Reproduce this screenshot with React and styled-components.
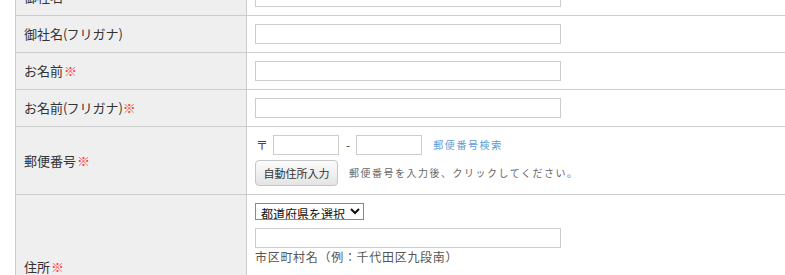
import React from 'react';
import styled, { createGlobalStyle } from 'styled-components';

const GlobalStyle = createGlobalStyle`
  body {
    margin: 0;
    background: #ffffff;
    overflow: hidden;
    font-family: "Noto Sans CJK JP", "Noto Sans", sans-serif;
    color: #333333;
  }
`;

// The page is scrolled so the first row sits partly above the window
const Page = styled.div`
  padding: 0 0 0 15px;
  margin-top: -22px;
`;

const Form = styled.div`
  width: 820px;
  border-bottom: 1px solid #cccccc;
`;

const Row = styled.div`
  display: flex;
  border-top: 1px solid #cccccc;
`;

const Label = styled.div`
  box-sizing: border-box;
  width: 232px;
  flex-shrink: 0;
  display: flex;
  align-items: center;
  padding: 0 8px;
  background: #efefef;
  border-left: 1px solid #cccccc;
  border-right: 1px solid #cccccc;
  font-size: 13px;
  color: #333333;
  line-height: 18px;
`;

const Paren = styled.span`
  letter-spacing: -1px;
`;

const Required = styled.span`
  color: #ff3b3b;
  margin-left: 1px;
`;

const Value = styled.div`
  flex: 1;
  padding: 8px;
  font-size: 12px;
  line-height: 18px;
`;

const TextInput = styled.input`
  display: block;
  box-sizing: border-box;
  width: ${(p) => p.$w || 306}px;
  height: ${(p) => p.$h || 20}px;
  margin: ${(p) => p.$m || 0};
  border: 1px solid #cccccc;
  border-radius: 0;
  padding: 0 4px;
  background: #ffffff;
  font-size: 12px;
  outline: none;
`;

const Line = styled.div`
  display: flex;
  align-items: center;
  height: ${(p) => p.$h || 20}px;
  margin-bottom: ${(p) => p.$mb || 0}px;
`;

const Mark = styled.span`
  font-size: 12px;
  color: #444444;
  margin: 0 ${(p) => p.$r || 6}px 0 ${(p) => p.$l || 2}px;
`;

const SearchLink = styled.a`
  margin-left: 11px;
  font-size: 10px;
  letter-spacing: 1.6px;
  color: #5b9bd5;
  text-decoration: none;
`;

const Button = styled.button`
  box-sizing: border-box;
  width: 83px;
  height: 26px;
  padding: 0;
  border: 1px solid #c6c6c6;
  border-radius: 4px;
  background: linear-gradient(#fbfbfb, #e4e4e4);
  font-family: "Noto Sans CJK JP", sans-serif;
  font-size: 11px;
  color: #333333;
`;

const Help = styled.span`
  margin-left: 11px;
  font-size: 10px;
  letter-spacing: 1.5px;
  color: #666666;
`;

const Select = styled.select`
  display: block;
  height: 17px;
  padding: 0 1px;
  margin-bottom: 8px;
  border: 1px solid #8a8a8a;
  border-radius: 0;
  background: #ffffff;
  font-family: "Noto Sans CJK JP", sans-serif;
  font-size: 12px;
  color: #111111;
`;

const Note = styled.div`
  font-size: 12px;
  line-height: 18px;
  letter-spacing: ${(p) => (p.$red ? 0 : 0.7)}px;
  color: ${(p) => (p.$red ? '#ff8a8a' : '#555555')};
  margin-top: ${(p) => p.$mt || 0}px;
`;

const fields = [
  { label: '御社名' },
  { label: '御社名', kana: true },
  { label: 'お名前', required: true },
  { label: 'お名前', kana: true, required: true },
];

export default function App() {
  return (
    <>
      <GlobalStyle />
      <Page>
        <Form>
          {fields.map((f, i) => (
            <Row key={i}>
              <Label>
                {f.label}
                {f.kana && (
                  <>
                    <Paren>(</Paren>フリガナ<Paren>)</Paren>
                  </>
                )}
                {f.required && <Required>※</Required>}
              </Label>
              <Value>
                <TextInput type="text" />
              </Value>
            </Row>
          ))}

          <Row>
            <Label>
              郵便番号<Required>※</Required>
            </Label>
            <Value>
              <Line $mb={5}>
                <Mark $l={1} $r={5}>〒</Mark>
                <TextInput type="text" $w={66} $h={20} />
                <Mark $l={7} $r={6}>-</Mark>
                <TextInput type="text" $w={66} $h={20} />
                <SearchLink href="#zip">郵便番号検索</SearchLink>
              </Line>
              <Line $h={26}>
                <Button type="button">自動住所入力</Button>
                <Help>郵便番号を入力後、クリックしてください。</Help>
              </Line>
            </Value>
          </Row>

          <Row>
            <Label>
              住所<Required>※</Required>
            </Label>
            <Value>
              <Select defaultValue="">
                <option value="">都道府県を選択</option>
                <option value="tokyo">東京都</option>
              </Select>
              <TextInput type="text" />
              <Note>市区町村名（例：千代田区九段南）</Note>
              <Note $red $mt={7}>※番地・建物名は下の欄にご入力ください。</Note>
              <TextInput type="text" $m="2px 0 0" />
              <Note>番地・建物名（例：1-2-3 九段ビル5F）</Note>
            </Value>
          </Row>
        </Form>
      </Page>
    </>
  );
}
